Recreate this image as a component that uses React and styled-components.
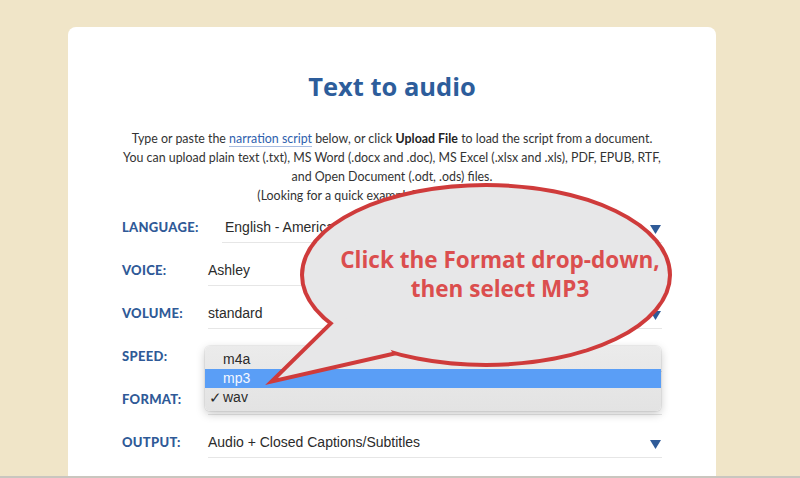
import React from 'react';
import styled, { createGlobalStyle } from 'styled-components';

const GlobalStyle = createGlobalStyle`
  html, body {
    margin: 0;
    padding: 0;
    background: #f0e5c8;
  }
  * {
    box-sizing: border-box;
  }
`;

// speed and format values sit under the open menu, so they are left blank
const fields = [
  { label: 'LANGUAGE:', value: 'English - American', indent: true },
  { label: 'VOICE:', value: 'Ashley' },
  { label: 'VOLUME:', value: 'standard' },
  { label: 'SPEED:', value: '' },
  { label: 'FORMAT:', value: '', menu: true },
  { label: 'OUTPUT:', value: 'Audio + Closed Captions/Subtitles' },
];

const formats = [
  { name: 'm4a' },
  { name: 'mp3', active: true },
  { name: 'wav', checked: true },
];

const Arrow = () => (
  <ArrowIcon viewBox="0 0 11 9">
    <path d="M0 0 H11 L5.5 9 Z" fill="#2f5b98" />
  </ArrowIcon>
);

const SpeechBubble = () => (
  <BubbleLayer>
    <svg width="480" height="210" viewBox="0 0 480 210">
      <g fill="#cf3b3b" stroke="#cf3b3b" strokeWidth="8" strokeLinejoin="miter">
        <ellipse cx="221" cy="93" rx="182" ry="88" />
        <polygon points="72,138 13,196 127,170 105,133" />
      </g>
      <g fill="#e7e7e8">
        <ellipse cx="221" cy="93" rx="182" ry="88" />
        <polygon points="72,138 13,196 127,170 105,133" />
      </g>
    </svg>
    <BubbleText>
      Click the Format drop-down,
      <br />
      then select MP3
    </BubbleText>
  </BubbleLayer>
);

const FormatMenu = () => (
  <Menu>
    {formats.map((f) => (
      <Option key={f.name} $active={f.active}>
        {f.checked && <Check>✓</Check>}
        {f.name}
      </Option>
    ))}
  </Menu>
);

const App = () => {
  return (
    <Page>
      <GlobalStyle />
      <Card>
        <Title>Text to audio</Title>
        <Description>
          Type or paste the <Link>narration script</Link> below, or click <b>Upload File</b> to load the
          script from a document.
          <br />
          You can upload plain text (.txt), MS Word (.docx and .doc), MS Excel (.xlsx and .xls), PDF, EPUB,
          RTF,
          <br />
          and Open Document (.odt, .ods) files.
          <br />
          (Looking for a quick example? Try a sample script.)
        </Description>
        <Form>
          {fields.map((f) => (
            <Field key={f.label}>
              <Label>{f.label}</Label>
              <ValueBox $indent={f.indent}>
                <span>{f.value}</span>
                <Arrow />
              </ValueBox>
              {f.menu && <FormatMenu />}
            </Field>
          ))}
        </Form>
        <SpeechBubble />
      </Card>
    </Page>
  );
};

export default App;

const Page = styled.div`
  height: 478px;
  overflow: hidden;
  padding: 27px 0 0 68px;
  border-bottom: 2px solid #c9c6bf;
`;

const Card = styled.div`
  position: relative;
  width: 648px;
  min-height: 470px;
  padding: 44px 54px 0;
  background: #ffffff;
  border-radius: 8px 8px 0 0;
`;

const Title = styled.h1`
  margin: 0;
  text-align: center;
  font-family: 'Open Sans', sans-serif;
  font-size: 25.5px;
  line-height: 31px;
  font-weight: 700;
  color: #2d5d9b;
`;

const Description = styled.p`
  margin: 27px -40px 0;
  text-align: center;
  white-space: nowrap;
  font-family: Lato, sans-serif;
  font-size: 12.4px;
  line-height: 19px;
  color: #333333;

  b {
    font-weight: 700;
    color: #222222;
  }
`;

const Link = styled.span`
  color: #2f5fae;
  border-bottom: 1px solid #a9bde0;
`;

const Form = styled.div`
  display: flex;
  flex-direction: column;
  gap: 11px;
  margin-top: 6px;
`;

const Field = styled.div`
  position: relative;
  display: flex;
  align-items: center;
  height: 32px;
`;

const Label = styled.div`
  width: 86px;
  flex-shrink: 0;
  font-family: Lato, sans-serif;
  font-size: 13px;
  font-weight: 900;
  letter-spacing: 0.3px;
  color: #2f5a97;
`;

const ValueBox = styled.div`
  flex: 1;
  height: 100%;
  display: flex;
  align-items: center;
  justify-content: space-between;
  margin-left: ${(p) => (p.$indent ? '14px' : '0')};
  padding-left: ${(p) => (p.$indent ? '3px' : '0')};
  border-bottom: 1px solid #e6e6e6;
  font-family: 'Liberation Sans', Arial, sans-serif;
  font-size: 14px;
  color: #2b2b2b;
`;

const ArrowIcon = styled.svg`
  width: 11px;
  height: 9px;
  margin: 6px 1px 0 0;
  flex-shrink: 0;
`;

const Menu = styled.div`
  position: absolute;
  top: -37px;
  left: 83px;
  right: 1px;
  height: 65px;
  padding: 4px 0;
  border-radius: 5px;
  background: linear-gradient(#ebebeb, #e3e3e3);
  box-shadow: 0 3px 10px rgba(0, 0, 0, 0.22), 0 0 0 1px rgba(0, 0, 0, 0.05);
  z-index: 2;
`;

const Option = styled.div`
  position: relative;
  height: 19px;
  line-height: 19px;
  padding-left: 18px;
  font-family: 'Liberation Sans', Arial, sans-serif;
  font-size: 14px;
  color: ${(p) => (p.$active ? '#f4f7ff' : '#2b2b2b')};
  background: ${(p) => (p.$active ? '#5a9ef6' : 'transparent')};
`;

const Check = styled.span`
  position: absolute;
  left: 4px;
  top: 0;
  font-size: 15px;
`;

const BubbleLayer = styled.div`
  position: absolute;
  left: 197px;
  top: 155px;
  width: 480px;
  height: 210px;
  z-index: 3;
  pointer-events: none;

  svg {
    position: absolute;
    inset: 0;
  }
`;

const BubbleText = styled.div`
  position: absolute;
  left: 0;
  top: 63px;
  width: 470px;
  text-align: center;
  font-family: 'Open Sans', sans-serif;
  font-size: 22.5px;
  line-height: 29px;
  font-weight: 700;
  color: #db4e4e;
`;
